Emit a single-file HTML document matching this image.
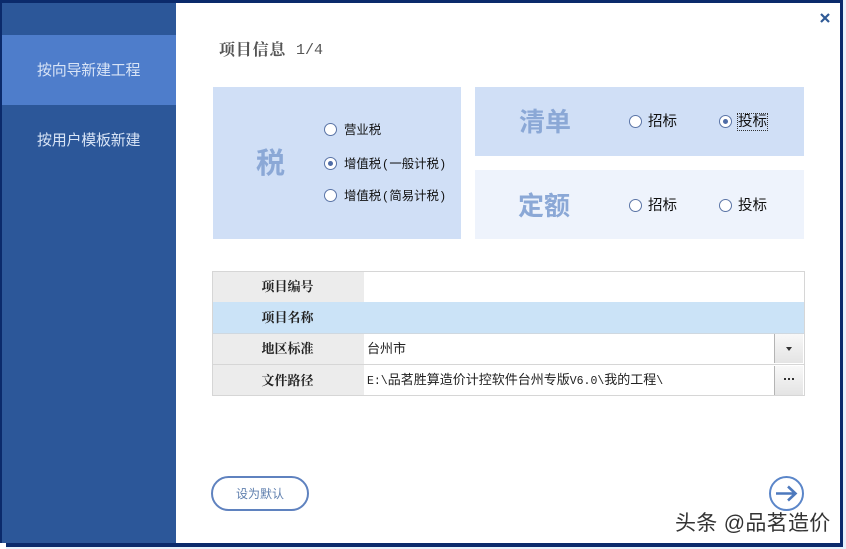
<!DOCTYPE html>
<html><head><meta charset="utf-8"><style>
html,body{margin:0;padding:0;background:#fff}
body{position:relative;width:846px;height:549px;overflow:hidden;font-family:"Liberation Sans","WenQuanYi Zen Hei","Noto Sans CJK SC",sans-serif;color:#111}
.a{position:absolute}
.t{position:absolute;white-space:nowrap;line-height:16px}
.r{position:absolute;width:11px;height:11px;border:1px solid #5a74a6;border-radius:50%;background:#fff}
.r.on:after{content:"";position:absolute;left:3px;top:3px;width:5px;height:5px;border-radius:50%;background:#4f6ca6}
.big{position:absolute;font-weight:bold;color:#8ba8d6;font-size:26px;line-height:30px;white-space:nowrap;font-family:"Liberation Sans","Noto Sans CJK SC",sans-serif}
.s{font-size:12.4px;font-family:"Liberation Sans","WenQuanYi Zen Hei",sans-serif;color:#111}
.s span{padding:0 2px}
.l{position:absolute;left:213px;width:151px;height:30px;background:#ececec;text-align:center;font-weight:bold;font-size:13px;line-height:31px;color:#222;font-family:"Liberation Serif","Noto Serif CJK SC",serif;text-indent:-2px}
.h{position:absolute;height:1px;background:#d6d6d6;left:212px;width:593px}
.btn{position:absolute;left:774px;width:29px;height:29px;background:linear-gradient(#f8f8f8,#e4e4e4);border-left:1px solid #b4b4b4;box-sizing:border-box;text-align:center;color:#333}
.m{font:11.5px 'Liberation Mono',monospace}
</style></head><body>
<div class="a" style="left:0;top:0;width:843px;height:546px;background:#0b2a6b"></div>
<div class="a" style="left:843px;top:0;width:3px;height:549px;background:#e6f1fb"></div>
<div class="a" style="left:0;top:546px;width:846px;height:3px;background:#e6f1fb"></div>
<div class="a" style="left:0;top:543px;width:6px;height:6px;background:#fff"></div>
<div class="a" style="left:6px;top:546px;width:837px;height:1px;background:#0b2a6b"></div>
<div class="a" style="left:2px;top:3px;width:174px;height:540px;background:#2c5799"></div>
<div class="a" style="left:176px;top:3px;width:664px;height:540px;background:#fff"></div>
<div class="a" style="left:2px;top:35px;width:174px;height:70px;background:#4e7dcb"></div>
<div class="t" style="left:37px;top:63px;font-size:15px;color:#d8e4f6;letter-spacing:-.25px">按向导新建工程</div>
<div class="t" style="left:37px;top:133px;font-size:15px;color:#d8e4f6;letter-spacing:-.25px">按用户模板新建</div>

<svg class="a" style="left:819px;top:12px" width="12" height="12" viewBox="0 0 12 12"><path d="M2 2L10 10M10 2L2 10" stroke="#2f5a96" stroke-width="2.2" fill="none"/></svg>

<div class="t" style="left:219px;top:43px;font-size:16px;letter-spacing:.8px;color:#555;font-weight:bold;font-family:'Liberation Serif','Noto Serif CJK SC',serif">项目信息</div>
<div class="t" style="left:296px;top:43px;font-size:15px;color:#555;font-family:'Liberation Mono',monospace">1/4</div>

<div class="a" style="left:213px;top:87px;width:248px;height:152px;background:#d0dff6"></div>
<div class="a" style="left:475px;top:87px;width:329px;height:69px;background:#d0dff6"></div>
<div class="a" style="left:475px;top:170px;width:329px;height:69px;background:#eef3fc"></div>

<div class="big" style="left:256px;top:149px;font-size:29px">税</div>
<div class="big" style="left:519px;top:107px">清单</div>
<div class="big" style="left:518px;top:191px">定额</div>

<div class="r" style="left:324px;top:123px"></div><div class="t s" style="left:344px;top:122px">营业税</div>
<div class="r on" style="left:324px;top:157px"></div><div class="t s" style="left:344px;top:156px">增值税<span>(</span>一般计税<span>)</span></div>
<div class="r" style="left:324px;top:189px"></div><div class="t s" style="left:344px;top:188px">增值税<span>(</span>简易计税<span>)</span></div>

<div class="r" style="left:629px;top:115px"></div><div class="t" style="left:648px;top:114px;font-size:14.5px">招标</div>
<div class="r on" style="left:719px;top:115px"></div><div class="t" style="left:738px;top:114px;font-size:14.5px;outline:1px dotted #333;outline-offset:0">投标</div>
<div class="r" style="left:629px;top:199px"></div><div class="t" style="left:648px;top:198px;font-size:14.5px">招标</div>
<div class="r" style="left:719px;top:199px"></div><div class="t" style="left:738px;top:198px;font-size:14.5px">投标</div>

<div class="a" style="left:212px;top:271px;width:593px;height:125px;background:#fff"></div>
<div class="a" style="left:364px;top:302px;width:440px;height:32px;background:#cbe3f7"></div>
<div class="l" style="top:272px;line-height:29px">项目编号</div>
<div class="l" style="top:302px;height:32px;line-height:32px;background:#cbe3f7">项目名称</div>
<div class="l" style="top:334px;line-height:29px">地区标准</div>
<div class="l" style="top:365px">文件路径</div>
<div class="h" style="top:271px"></div>
<div class="h" style="top:333px;background:#cfd8e0"></div>
<div class="h" style="top:364px"></div>
<div class="h" style="top:395px"></div>
<div class="a" style="left:212px;top:271px;width:1px;height:125px;background:#d6d6d6"></div>
<div class="a" style="left:804px;top:271px;width:1px;height:125px;background:#d6d6d6"></div>
<div class="t" style="left:367px;top:341px;font-size:13px;color:#222">台州市</div>
<div class="t" style="left:367px;top:372px;font-size:13px;color:#222;font-family:'Liberation Sans','WenQuanYi Zen Hei',sans-serif"><span class="m">E:\</span>品茗胜算造价计控软件台州专版<span class="m">V6.0\</span>我的工程<span class="m">\</span></div>
<div class="btn" style="top:334px"><svg width="8" height="5" style="position:absolute;left:10px;top:13px"><path d="M1 0H7L4 4Z" fill="#333"/></svg></div>
<div class="btn" style="top:366px"><svg width="12" height="3" style="position:absolute;left:9px;top:12px"><path d="M0 0h2v2H0zM4 0h2v2H4zM8 0h2v2H8z" fill="#333"/></svg></div>

<div class="a" style="left:211px;top:476px;width:98px;height:35px;box-sizing:border-box;border:2px solid #5f82bf;border-radius:18px;text-align:center;font-size:12px;line-height:33px;color:#5f7fae">设为默认</div>

<svg class="a" style="left:768px;top:475px" width="37" height="37" viewBox="0 0 37 37"><circle cx="18.5" cy="18.5" r="16.5" fill="#fff" stroke="#5b86c9" stroke-width="2"/><path d="M8 18.5H27M20 11.5L27.5 18.5L20 25.5" fill="none" stroke="#4d79bd" stroke-width="2.6"/></svg>

<div class="t" style="left:675px;top:513px;font-size:21px;line-height:22px;letter-spacing:.3px;color:#333;text-shadow:0 0 1px #fff,1px 1px 0 #fff">头条 @品茗造价</div>
</body></html>
